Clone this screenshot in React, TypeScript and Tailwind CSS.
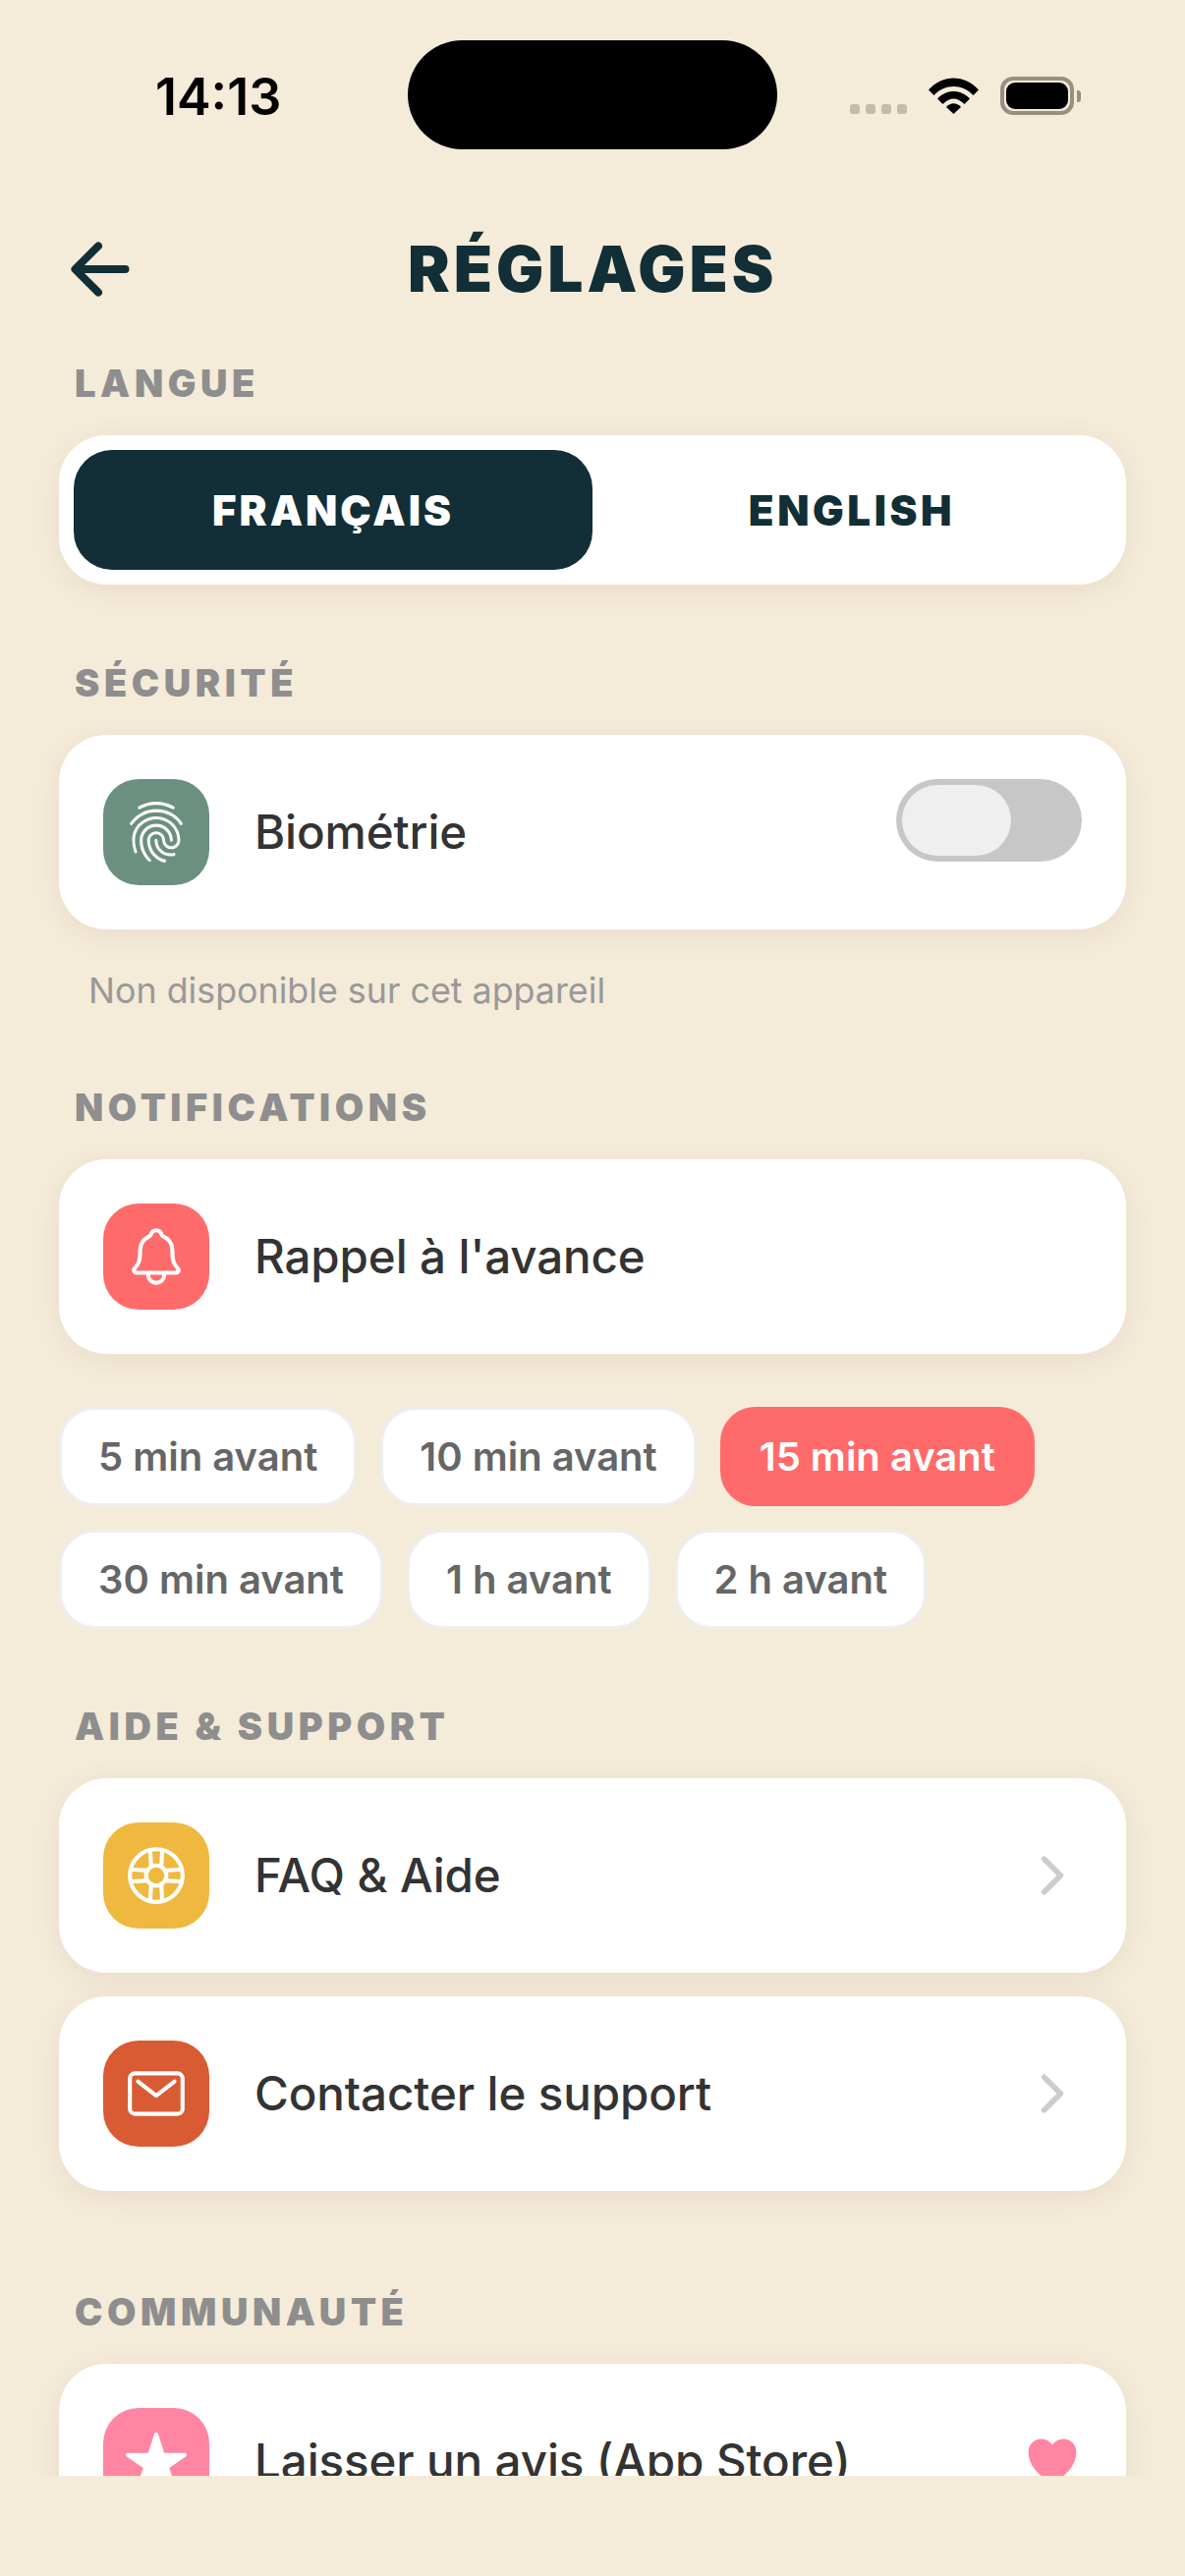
import React from "react";
import {
  IoArrowBack,
  IoChevronForward,
  IoFingerPrintOutline,
  IoHeart,
  IoHelpBuoyOutline,
  IoMailOutline,
  IoNotificationsOutline,
  IoStar,
} from "react-icons/io5";

const row1 = ["5 min avant", "10 min avant", "15 min avant"];
const row2 = ["30 min avant", "1 h avant", "2 h avant"];

function SectionTitle({ children }: { children: React.ReactNode }) {
  return (
    <h2 className="mb-[29px] ml-[16px] h-[48px] text-[38px] leading-[48px] font-black tracking-[4.6px] text-[#8e8e8e]">
      {children}
    </h2>
  );
}

function Card({ children }: { children: React.ReactNode }) {
  return (
    <div className="flex h-[198px] items-center rounded-[48px] bg-white px-[45px] shadow-[0_6px_30px_rgba(120,90,40,0.09)]">
      {children}
    </div>
  );
}

function IconBox({ color, children }: { color: string; children: React.ReactNode }) {
  return (
    <div className={`flex h-[108px] w-[108px] shrink-0 items-center justify-center rounded-[36px] text-white ${color}`}>
      {children}
    </div>
  );
}

function RowLabel({ children }: { children: React.ReactNode }) {
  return <span className="ml-[46px] flex-1 text-[47.5px] leading-[60px] font-[530] tracking-[-0.1px] text-[#333333]">{children}</span>;
}

function Chip({ label }: { label: string }) {
  const active = label === "15 min avant";
  return (
    <button
      className={
        active
          ? "h-[101px] rounded-[36px] border-[3px] border-[#ff6b6b] bg-[#ff6b6b] px-[37px] text-[40px] font-semibold text-white"
          : "h-[101px] rounded-[36px] border-[3px] border-[#eeeeee] bg-white px-[37px] text-[40px] font-semibold text-[#666666]"
      }
    >
      {label}
    </button>
  );
}

export default function App() {
  return (
    <div className="flex h-[2622px] w-[1206px] flex-col overflow-hidden bg-[#f4ebd9] [font-family:Inter,sans-serif]">
      {/* Status bar */}
      <div className="flex h-[219px] shrink-0 items-start pt-[41px]">
        <span className="mt-[28px] ml-[158px] w-[257px] text-[52px] leading-[60px] font-semibold text-black">14:13</span>
        <div className="h-[111px] w-[376px] rounded-[56px] bg-black" />
        <div className="mt-[65px] ml-[74px] flex gap-[6px]">
          <span className="h-[10px] w-[10px] rounded-[3px] bg-[#c4bbab]" />
          <span className="h-[10px] w-[10px] rounded-[3px] bg-[#c4bbab]" />
          <span className="h-[10px] w-[10px] rounded-[3px] bg-[#c4bbab]" />
          <span className="h-[10px] w-[10px] rounded-[3px] bg-[#c4bbab]" />
        </div>
        <svg className="mt-[38px] ml-[22px]" width="51" height="37" viewBox="0 0 51 37">
          <path d="M0 12.5C14-3.5 37-3.5 51 12.5L45.5 18C34.500 6 16.500 6 5.500 18Z" fill="#000" />
          <path d="M9 21.500C18 11.500 33 11.500 42 21.500L36.500 27C29.500 19.500 21.500 19.500 14.500 27Z" fill="#000" />
          <path d="M18 30C22.500 25 28.500 25 33 30L25.500 37Z" fill="#000" />
        </svg>
        <div className="mt-[37px] ml-[22px] flex items-center">
          <div className="flex h-[39px] w-[75px] items-center justify-center rounded-[13px] border-[4px] border-[#98907f] p-[2px]">
            <div className="h-full w-full rounded-[9px] bg-black" />
          </div>
          <div className="ml-[3px] h-[12px] w-[4px] rounded-r-[3px] bg-[#98907f]" />
        </div>
      </div>

      {/* Header */}
      <div className="flex h-[110px] shrink-0 items-center">
        <IoArrowBack size={84} className="ml-[60px] shrink-0 text-[#122e36]" />
        <h1 className="ml-[271px] text-[64px] leading-[80px] font-black tracking-[4px] text-[#122e36]">RÉGLAGES</h1>
      </div>

      {/* Contenu, coupé par la barre du bas */}
      <div className="mb-[102px] min-h-0 flex-1 overflow-hidden px-[60px] pt-[37px]">
        <SectionTitle>LANGUE</SectionTitle>
        <div className="flex h-[152px] rounded-[48px] bg-white p-[15px] shadow-[0_6px_30px_rgba(120,90,40,0.09)]">
          <button className="flex-1 rounded-[39px] bg-[#122e36] text-[42px] font-black tracking-[3px] text-white">FRANÇAIS</button>
          <button className="flex-1 rounded-[39px] text-[42px] font-black tracking-[3.6px] text-[#122e36]">ENGLISH</button>
        </div>

        <div className="mt-[76px]">
          <SectionTitle>SÉCURITÉ</SectionTitle>
          <Card>
            <IconBox color="bg-[#6b9080]">
              <IoFingerPrintOutline size={66} />
            </IconBox>
            <RowLabel>Biométrie</RowLabel>
            <div className="mb-[24px] flex h-[84px] w-[189px] items-center rounded-full bg-[#c7c7c7] pl-[6px]">
              <div className="h-[72px] w-[111px] rounded-full bg-[#efefef]" />
            </div>
          </Card>
          <p className="mt-[38px] ml-[30px] text-[35.8px] leading-[48px] text-[#999999]">Non disponible sur cet appareil</p>
        </div>

        <div className="mt-[71px]">
          <SectionTitle>NOTIFICATIONS</SectionTitle>
          <Card>
            <IconBox color="bg-[#ff6b6b]">
              <IoNotificationsOutline size={66} />
            </IconBox>
            <RowLabel>Rappel à l'avance</RowLabel>
          </Card>
          <div className="mt-[54px] flex flex-col gap-[24px]">
            <div className="flex gap-[24px]">
              {row1.map((c) => (
                <Chip key={c} label={c} />
              ))}
            </div>
            <div className="flex gap-[24px]">
              {row2.map((c) => (
                <Chip key={c} label={c} />
              ))}
            </div>
          </div>
        </div>

        <div className="mt-[75px]">
          <SectionTitle>AIDE &amp; SUPPORT</SectionTitle>
          <div className="flex flex-col gap-[24px]">
            <Card>
              <IconBox color="bg-[#efb93f]">
                <IoHelpBuoyOutline size={66} />
              </IconBox>
              <RowLabel>FAQ &amp; Aide</RowLabel>
              <IoChevronForward size={60} className="text-[#cccccc]" />
            </Card>
            <Card>
              <IconBox color="bg-[#d95b33]">
                <IoMailOutline size={66} />
              </IconBox>
              <RowLabel>Contacter le support</RowLabel>
              <IoChevronForward size={60} className="text-[#cccccc]" />
            </Card>
          </div>
        </div>

        <div className="mt-[99px]">
          <SectionTitle>COMMUNAUTÉ</SectionTitle>
          <Card>
            <IconBox color="bg-[#ff85a2]">
              <IoStar size={66} />
            </IconBox>
            <RowLabel>Laisser un avis (App Store)</RowLabel>
            <IoHeart size={60} className="text-[#ff85a2]" />
          </Card>
        </div>
      </div>
    </div>
  );
}
